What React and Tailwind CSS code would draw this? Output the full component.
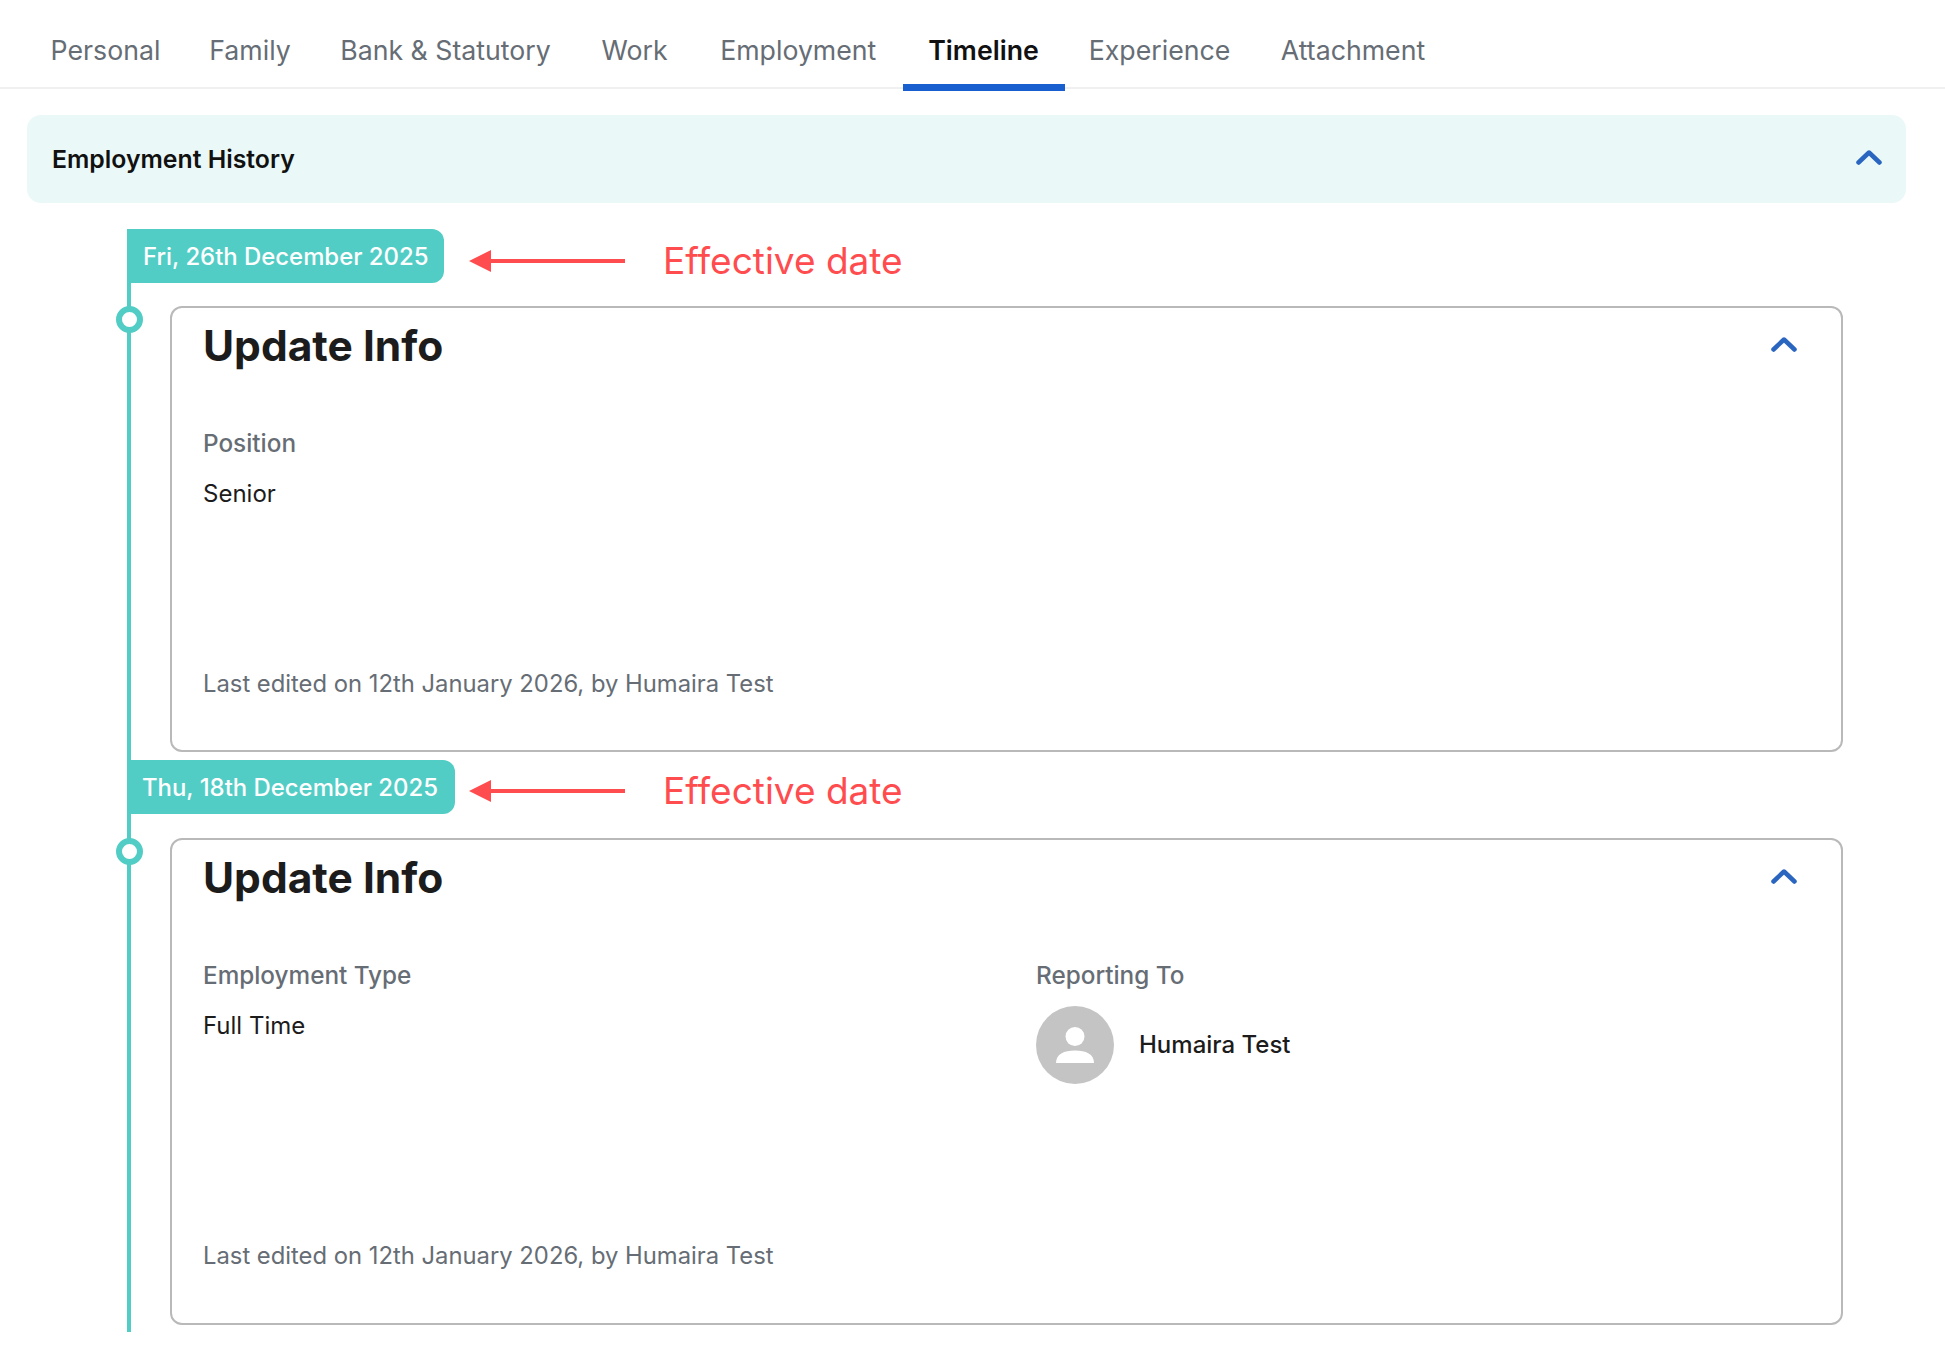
import React from "react";

const tabs = [
  { name: "Personal", width: "w-[157px]" },
  { name: "Family", width: "w-[132px]" },
  { name: "Bank & Statutory", width: "w-[259px]" },
  { name: "Work", width: "w-[119px]" },
  { name: "Employment", width: "w-[208.5px]" },
  { name: "Timeline", width: "w-[162px]" },
  { name: "Experience", width: "w-[190px]" },
  { name: "Attachment", width: "w-[197px]" },
];

function Chevron() {
  return (
    <svg width="26" height="16" viewBox="0 0 26 16" fill="none" className="block -mt-[4px]">
      <path d="M2.5 13.5 L13 3.5 L23.5 13.5" stroke="#2a66c0" strokeWidth="4.5" strokeLinecap="round" strokeLinejoin="round" />
    </svg>
  );
}

function DateTag({ label, tagClass, arrowClass, noteClass }) {
  return (
    <div className="flex items-center -ml-[4px]">
      <div className={`h-[54px] pt-[1px] flex items-center rounded-r-[12px] bg-[#52cdc5] text-white text-[23.9px] font-medium whitespace-nowrap ${tagClass}`}>
        {label}
      </div>
      {/* red annotation added on top of the screenshot */}
      <svg width="156" height="24" viewBox="0 0 156 24" className={`shrink-0 ${arrowClass}`}>
        <path d="M0 12 L22 1 L22 10 L156 10 L156 14 L22 14 L22 23 Z" fill="#ff4d4f" />
      </svg>
      <span className={`ml-[38px] text-[37px] leading-none text-[#ff4d4f] ${noteClass}`}>Effective date</span>
    </div>
  );
}

function Field({ label, value }) {
  return (
    <div>
      <div className="text-[24.3px] leading-[30px] font-medium text-[#666d75]">{label}</div>
      <div className="mt-[21px] text-[24px] leading-[30px] text-[#1c1c1c]">{value}</div>
    </div>
  );
}

function Card({ heightClass, children }) {
  return (
    <div className="relative ml-[39px] w-[1673px]">
      {/* dot on the line */}
      <div className="absolute -left-[54px] top-[0px] w-[27px] h-[27px] rounded-full border-[6px] border-[#52cdc5] bg-white"></div>
      <div className={`${heightClass} rounded-[12px] border-2 border-[#b9b9b9] pl-[31px] pr-[44px] flex flex-col`}>
        <div className="flex items-center justify-between pt-[10px]">
          <h2 className="text-[42.5px] leading-[56px] font-bold text-[#1c1c1c]">Update Info</h2>
          <Chevron />
        </div>
        {children}
      </div>
    </div>
  );
}

function Footer({ marginClass }) {
  return (
    <div className={`text-[23.8px] leading-[30px] text-[#666d75] ${marginClass}`}>
      Last edited on 12th January 2026, by Humaira Test
    </div>
  );
}

export default function App() {
  return (
    <div className="w-[1945px] h-[1364px] bg-white font-['Inter',sans-serif] overflow-hidden">
      {/* Tabs */}
      <nav className="h-[89px] border-b-2 border-[#f0f0f0] flex pl-[27px]">
        {tabs.map((t) => (
          <div
            key={t.name}
            className={`h-[91px] ${t.width} pt-[16px] flex items-center justify-center whitespace-nowrap text-[26.7px] ${
              t.name === "Timeline" ? "font-semibold text-[#111] border-b-[7px] border-[#1a5fd0]" : "text-[#666d75] border-b-[7px] border-transparent"
            }`}
          >
            {t.name}
          </div>
        ))}
      </nav>

      {/* Section header */}
      <div className="mt-[26px] ml-[27px] w-[1879px] h-[88px] rounded-[14px] bg-[#eaf9f8] flex items-center justify-between pl-[25px] pr-[24px]">
        <span className="text-[24.8px] font-semibold text-[#111] mt-[1px]">Employment History</span>
        <Chevron />
      </div>

      {/* Timeline */}
      <div className="mt-[26px] ml-[127px] w-[1720px] h-[1103px] border-l-4 border-[#52cdc5]">
        <DateTag label="Fri, 26th December 2025" tagClass="pl-[16px] w-[317px]" arrowClass="ml-[25px] mt-[10px]" noteClass="mt-[8px]" />
        <div className="mt-[23px]">
          <Card heightClass="h-[446px]">
            <div className="mt-[54px]">
              <Field label="Position" value="Senior" />
            </div>
            <Footer marginClass="mt-[160px]" />
          </Card>
        </div>
        <div className="mt-[8px]">
          <DateTag label="Thu, 18th December 2025" tagClass="pl-[15px] w-[328px]" arrowClass="ml-[14px] mt-[8px]" noteClass="mt-[6px]" />
        </div>
        <div className="mt-[24px]">
          <Card heightClass="h-[487px]">
            <div className="mt-[54px] grid grid-cols-[833px_1fr] h-[275px]">
              <Field label="Employment Type" value="Full Time" />
              <div>
                <div className="text-[24.3px] leading-[30px] font-medium text-[#666d75]">Reporting To</div>
                <div className="mt-[16px] flex items-center">
                  <div className="w-[78px] h-[78px] rounded-full bg-[#c4c4c4] flex items-center justify-center">
                    <svg width="40" height="40" viewBox="0 0 40 40" fill="white">
                      <circle cx="20" cy="11.5" r="9.5" />
                      <path d="M1 38 C1 29 9 25.5 20 25.5 C31 25.5 39 29 39 38 Z" />
                    </svg>
                  </div>
                  <span className="ml-[25px] text-[24px] font-medium text-[#1c1c1c]">Humaira Test</span>
                </div>
              </div>
            </div>
            <Footer marginClass="mt-[6px]" />
          </Card>
        </div>
      </div>
    </div>
  );
}
